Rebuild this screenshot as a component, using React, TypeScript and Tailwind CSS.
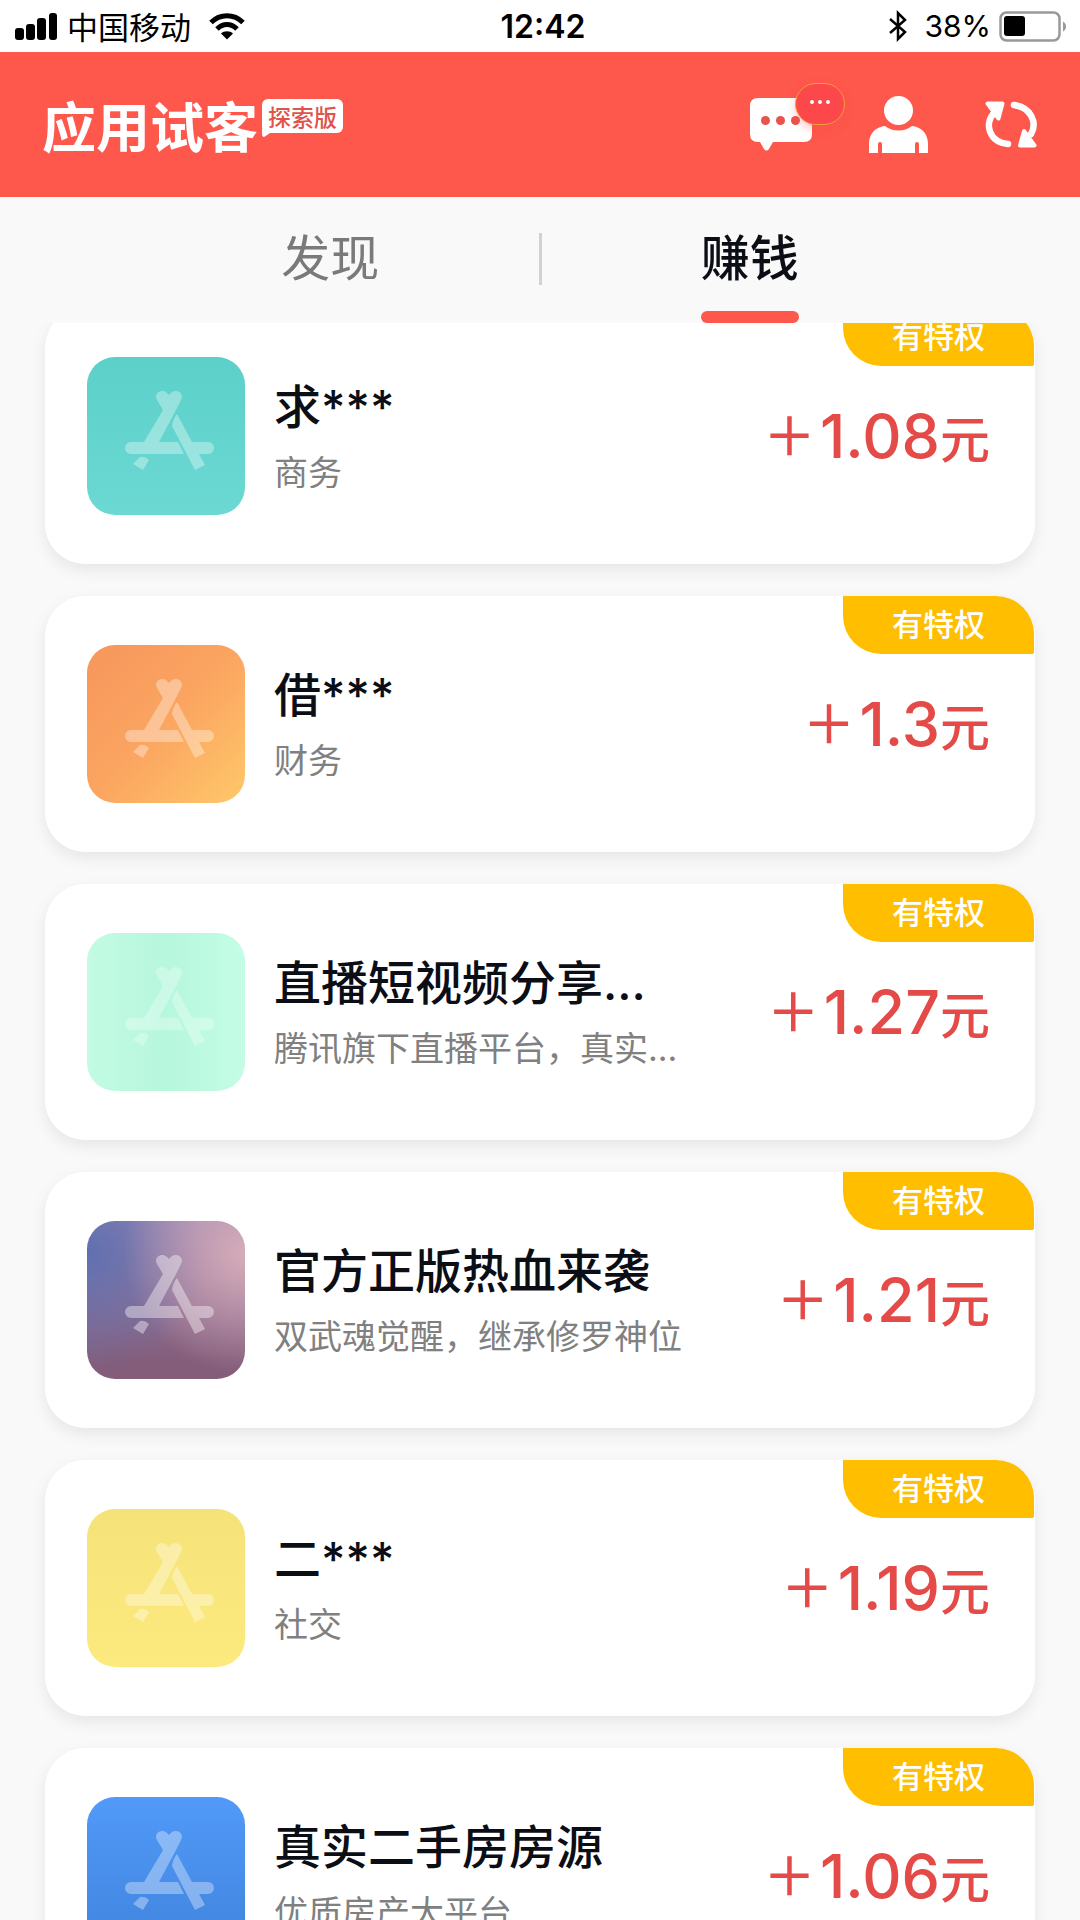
type Offer = {
  title: string
  subtitle: string
  price: string
  icon: string
}

const offers: Offer[] = [
  { title: '求***', subtitle: '商务', price: '1.08', icon: 'bg-linear-to-b from-[#5bd0c9] to-[#6cd9d3] text-white/35' },
  { title: '借***', subtitle: '财务', price: '1.3', icon: 'bg-linear-to-br from-[#f6965c] via-[#fba561] to-[#fec869] text-white/35' },
  { title: '直播短视频分享...', subtitle: '腾讯旗下直播平台\uFF0C真实...', price: '1.27', icon: 'bg-linear-to-r from-[#c3fbe3] via-[#b6f7dd] to-[#c4fde6] text-white/30' },
  {
    title: '官方正版热血来袭',
    subtitle: '双武魂觉醒\uFF0C继承修罗神位',
    price: '1.21',
    icon: 'bg-[radial-gradient(circle_at_100%_20%,#d6acb8_0%,transparent_60%),radial-gradient(circle_at_0%_20%,#5f70b0_0%,transparent_60%),linear-gradient(#9d86b2,#845d7a_90%)] text-white/40',
  },
  { title: '二***', subtitle: '社交', price: '1.19', icon: 'bg-linear-to-b from-[#f5e37a] to-[#fdea7e] text-white/35' },
  { title: '真实二手房房源', subtitle: '优质房产大平台', price: '1.06', icon: 'bg-linear-to-b from-[#529af9] to-[#3f83dc] text-white/35' },
]

function StoreMark() {
  return (
    <svg viewBox="0 0 158 158" className="size-full" aria-hidden="true">
      {/* one path, so overlapping sticks do not add up in opacity */}
      <path
        fill="currentColor"
        d="M70 43C66 36 75 31 80 36L82 38L84 36C89 31 98 36 94 43L89 53L72 85H91L97 97H44A6 6 0 0 1 44 85H57L76 53ZM90 57L105 85H121A6 6 0 0 1 121 97H112L118 108L108 113L85 69Q86 62 90 57ZM53 100Q58 99 62 103L56 113L46 107Z"
      />
    </svg>
  )
}

function StatusBar() {
  return (
    <div className="relative flex h-[52px] items-center justify-between bg-white pr-3 pl-[15px] text-black">
      <div className="flex items-center">
        <svg width="42" height="27" viewBox="0 0 42 27" fill="currentColor" aria-hidden="true">
          <rect x="0" y="15" width="9" height="12" rx="3" />
          <rect x="11" y="11" width="9" height="16" rx="3" />
          <rect x="22" y="5" width="9" height="22" rx="3" />
          <rect x="34" y="0" width="8" height="27" rx="3" />
        </svg>
        <span className="ml-[10px] text-[31px] leading-[46px]">中国移动</span>
        <svg className="ml-[18px]" width="36" height="27" viewBox="0 0 36 27" fill="none" stroke="currentColor" aria-hidden="true">
          <path d="M2 9.500C11 0.500 25 0.500 34 9.500" strokeWidth="5" />
          <path d="M8 16C14 10 22 10 28 16" strokeWidth="5" />
          <path d="M12 20.500C15 17.500 21 17.500 24 20.500L18 26.500Z" fill="currentColor" stroke="none" />
        </svg>
      </div>
      <span className="absolute left-1/2 -translate-x-1/2 pt-[2px] pl-[6px] font-[Inter] text-[32px] font-semibold">12:42</span>
      <div className="flex items-center">
        <svg width="20" height="32" viewBox="0 0 20 32" fill="none" stroke="currentColor" strokeWidth="2.500" aria-hidden="true">
          <path d="M2 9L17 22L10 29V3L17 10L2 23" />
        </svg>
        <span className="ml-4 font-[Inter] text-[30px]">38%</span>
        <svg className="ml-2" width="69" height="31" viewBox="0 0 69 31" aria-hidden="true">
          <rect x="1.500" y="1.500" width="59" height="28" rx="6" fill="none" stroke="#999" strokeWidth="2.500" />
          <rect x="5" y="5" width="21" height="20" rx="3" fill="#000" />
          <path d="M64 10.500C68 12.500 68 18.500 64 20.500Z" fill="#999" />
        </svg>
      </div>
    </div>
  )
}

function Header() {
  return (
    <header className="flex h-[145px] items-center justify-between bg-[#fe574b] pr-[43px] pl-[42px] text-white">
      <div className="flex items-start">
        <h1 className="text-[54px] leading-[56px] font-bold">应用试客</h1>
        <span className="relative mt-[2px] ml-[4px] rounded-[6px] bg-white px-[6px] text-[23px] leading-[34px] font-medium text-[#e0534c]">
          探索版
          <svg className="absolute top-full left-0 -mt-1" width="12" height="8" viewBox="0 0 12 8" fill="#fff" aria-hidden="true">
            <path d="M0 0H12V4H8L3 7.500Q0 9 0 5Z" />
          </svg>
        </span>
      </div>
      <div className="flex items-center gap-[57px]">
        <button type="button" aria-label="消息" className="relative">
          <svg width="62" height="53" viewBox="0 0 62 53" aria-hidden="true">
            <path d="M8 0H54Q62 0 62 8V36Q62 44 54 44H23L19 51Q16.500 54 14 51L10 44H8Q0 44 0 36V8Q0 0 8 0Z" fill="#fff" />
            <g fill="#e8534c">
              <circle cx="15.500" cy="22.500" r="4.500" />
              <circle cx="30.500" cy="22.500" r="4.500" />
              <circle cx="45.500" cy="22.500" r="4.500" />
            </g>
          </svg>
          <span className="absolute -top-[15px] left-[45px] flex h-[42px] w-[50px] justify-center gap-1 rounded-full border border-[#f0a03a] bg-[#fd484b] pt-[16px] shadow-[0_4px_10px_rgba(253,72,75,0.3)]">
            <i className="size-1 rounded-full bg-white" />
            <i className="size-1 rounded-full bg-white" />
            <i className="size-1 rounded-full bg-white" />
          </span>
        </button>
        <button type="button" aria-label="我的">
          <svg width="59" height="57" viewBox="0 0 59 57" fill="currentColor" aria-hidden="true">
            <circle cx="29.500" cy="14.500" r="14.500" />
            <path d="M0 57V48C0 37 7 31 16 30C24 36 35 36 43 30C52 31 59 37 59 48V57H50V48a2 2 0 0 0-4 0V57H13V48a2 2 0 0 0-4 0V57Z" />
          </svg>
        </button>
        <button type="button" aria-label="刷新">
          <svg width="52" height="47" viewBox="0 0 52 47" fill="none" stroke="currentColor" strokeLinecap="round" strokeLinejoin="round" aria-hidden="true">
            <path d="M9 12C-1 23 4 41 23 43" strokeWidth="6.500" />
            <path d="M29 4C45 6 53 21 46 33" strokeWidth="6.500" />
            <path d="M2.500 2.500L17.500 2.500L13.500 17.500Z" fill="currentColor" strokeWidth="4" />
            <path d="M39 30L49.500 44.500L35 44.500Z" fill="currentColor" strokeWidth="4" />
          </svg>
        </button>
      </div>
    </header>
  )
}

function Tabs() {
  return (
    <nav className="flex items-start px-[121px] pt-[22px] text-[49px] leading-[72px]">
      <button type="button" className="flex flex-1 justify-center text-[#7a7a7a]">发现</button>
      <span className="-mx-px mt-[14px] h-[52px] w-[3px] bg-[#d2d2d2]" />
      <button type="button" className="flex flex-1 flex-col items-center font-medium text-[#0c0e16]">
        赚钱
        <span className="mt-5 h-3 w-[98px] rounded-full bg-[#fe574b]" />
      </button>
    </nav>
  )
}

function OfferCard({ title, subtitle, price, icon }: Offer) {
  return (
    <li className="relative flex items-center rounded-[40px] bg-white py-[49px] pr-[45px] pl-[42px] shadow-[0_6px_16px_rgba(0,0,0,0.08)]">
      <div className={`size-[158px] shrink-0 overflow-hidden rounded-[28px] ${icon}`}>
        <StoreMark />
      </div>
      <div className="ml-[29px] min-w-0 flex-1 pb-[2px] font-[Inter,'Noto_Sans_CJK_SC',sans-serif]">
        <h2 className="truncate text-[47px] leading-[70px] font-medium text-[#0c0e16]">{title}</h2>
        <p className="mt-[6px] truncate text-[34px] leading-[50px] text-[#808080]">{subtitle}</p>
      </div>
      <p className="flex items-center font-medium whitespace-nowrap text-[#e44b48]">
        <span className="mr-1 pb-[6px] text-[53px] leading-[66px]">{'\uFF0B'}</span>
        <span className="font-[Inter] text-[61px] leading-[72px]">{price}</span>
        <span className="text-[50px] leading-[72px]">元</span>
      </p>
      <span className="absolute top-0 right-px rounded-tr-[38px] rounded-br-[2px] rounded-bl-[38px] bg-[#ffbe00] px-[49px] pb-1 text-[31px] leading-[54px] font-medium text-white">
        有特权
      </span>
    </li>
  )
}

export default function App() {
  return (
    <div className="flex h-screen flex-col overflow-hidden bg-[#f9f9f9] font-['Noto_Sans_CJK_SC',sans-serif]">
      <StatusBar />
      <Header />
      <Tabs />
      <main className="flex-1 overflow-hidden px-[45px]">
        <ul className="-mt-[15px] flex flex-col gap-8">
          {offers.map((o) => (
            <OfferCard key={o.title} {...o} />
          ))}
        </ul>
      </main>
    </div>
  )
}
